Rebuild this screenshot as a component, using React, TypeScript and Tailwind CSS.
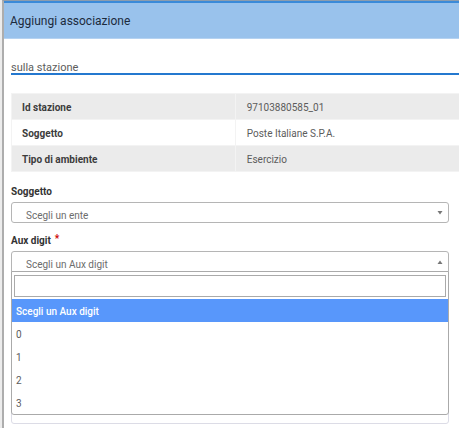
import { useState } from "react";

const details = [
  { label: "Id stazione", value: "97103880585_01" },
  { label: "Soggetto", value: "Poste Italiane S.P.A." },
  { label: "Tipo di ambiente", value: "Esercizio" },
];

const placeholder = "Scegli un Aux digit";
const options = [placeholder, "0", "1", "2", "3"];

function Caret({ up = false }: { up?: boolean }) {
  return (
    <svg aria-hidden="true" viewBox="0 0 6 4" className="h-1 w-1.5 fill-[#777777]">
      <path d={up ? "M0.5 4L3 0.5L5.5 4Z" : "M0.5 0H5.5L3 3.5Z"} />
    </svg>
  );
}

function AuxDigitSelect() {
  const [open, setOpen] = useState(true);
  const [selected, setSelected] = useState(placeholder);
  const [query, setQuery] = useState("");
  const shown = options.filter((o) => o.toLowerCase().includes(query.toLowerCase()));

  return (
    <div className="relative">
      <button
        id="aux"
        type="button"
        role="combobox"
        aria-expanded={open}
        aria-controls="aux-list"
        onClick={() => setOpen(!open)}
        className="flex h-[21px] w-full items-center justify-between rounded-t-[3px] border border-[#b5b5b5] bg-white pr-[5px] pl-3.5 text-left"
      >
        <span className="pt-1.5 text-[10px] leading-4 text-[#6c6c6c]">{selected}</span>
        <Caret up />
      </button>
      {open && (
        <div className="absolute inset-x-0 top-5 z-10 rounded-b-[3px] border border-[#aaaaaa] bg-white">
          <div className="p-0.5 pt-[3px]">
            <input
              type="search"
              aria-label="Cerca"
              value={query}
              onChange={(e) => setQuery(e.target.value)}
              className="block h-[22px] w-full border border-[#aaaaaa] bg-white px-1 text-[10px] outline-none"
            />
          </div>
          <ul id="aux-list" role="listbox" aria-label="Aux digit">
            {shown.map((o) => (
              <li key={o} role="option" aria-selected={o === selected}>
                <button
                  type="button"
                  onClick={() => {
                    setSelected(o);
                    setOpen(false);
                  }}
                  className={
                    o === selected
                      ? "block h-[23px] w-full bg-[#5897fb] px-1 pt-0.5 text-left text-[10px] font-medium text-white"
                      : "block h-[23px] w-full px-1 pt-0.5 text-left text-[10px] text-[#5c5c5c]"
                  }
                >
                  {o}
                </button>
              </li>
            ))}
          </ul>
        </div>
      )}
    </div>
  );
}

export default function App() {
  return (
    <div className="bg-[#ececec] pl-0.5 font-['Roboto','Liberation_Sans',sans-serif] text-[#5c5c5c]">
      <main className="min-h-screen border-t border-l-2 border-t-[#8c9cad] border-l-[#adadad] bg-white">
        <header className="flex h-[38px] items-center border-t-2 border-b border-t-[#3b8ad8] border-b-[#b5d2f1] bg-[#99c2ec] pl-1.5">
          <h1 className="text-xs leading-5 text-[#1c2b3c]">Aggiungi associazione</h1>
        </header>

        <form className="pl-[7px]" onSubmit={(e) => e.preventDefault()}>
          <h2 className="mt-5 border-b-2 border-[#2478cf] pt-1 text-[11px] leading-[10px]">sulla stazione</h2>

          <table className="mt-[18px] w-full table-fixed border-collapse text-left text-[10px] leading-4">
            <tbody>
              {details.map((d) => (
                <tr key={d.label} className="h-[26px] border border-r-0 border-[#f3f3f3] odd:bg-[#ebebeb]">
                  <th scope="row" className="border-r border-[#f3f3f3] px-2.5 pt-0.5 font-bold text-[#3c3c3c]">
                    {d.label}
                  </th>
                  <td className="px-[11px] pt-0.5">{d.value}</td>
                </tr>
              ))}
            </tbody>
          </table>

          <div className="mr-2.5">
            <label htmlFor="ente" className="mt-3 block text-[10px] leading-4 font-bold text-[#333333]">
              Soggetto
            </label>
            <div className="mt-0.5 flex items-center rounded-[3px] border border-[#b5b5b5] pr-[5px]">
              <select
                id="ente"
                className="h-[19px] min-w-0 grow appearance-none bg-transparent pt-1.5 pl-3.5 text-[10px] leading-3 text-[#6c6c6c] outline-none"
              >
                <option>Scegli un ente</option>
              </select>
              <Caret />
            </div>

            <label htmlFor="aux" className="mt-2.5 flex gap-1 text-[10px] leading-4 font-bold text-[#333333]">
              Aux digit
              <span aria-hidden="true" className="leading-3 text-[#cc0000]">
                *
              </span>
            </label>
            <div className="mt-0.5">
              <AuxDigitSelect />
            </div>

            <input
              type="text"
              aria-label="Codice"
              className="mt-[130px] block h-[22px] w-full rounded-[3px] border border-[#dcdce6] bg-white px-3 text-[10px] outline-none"
            />
          </div>
        </form>
      </main>
    </div>
  );
}
